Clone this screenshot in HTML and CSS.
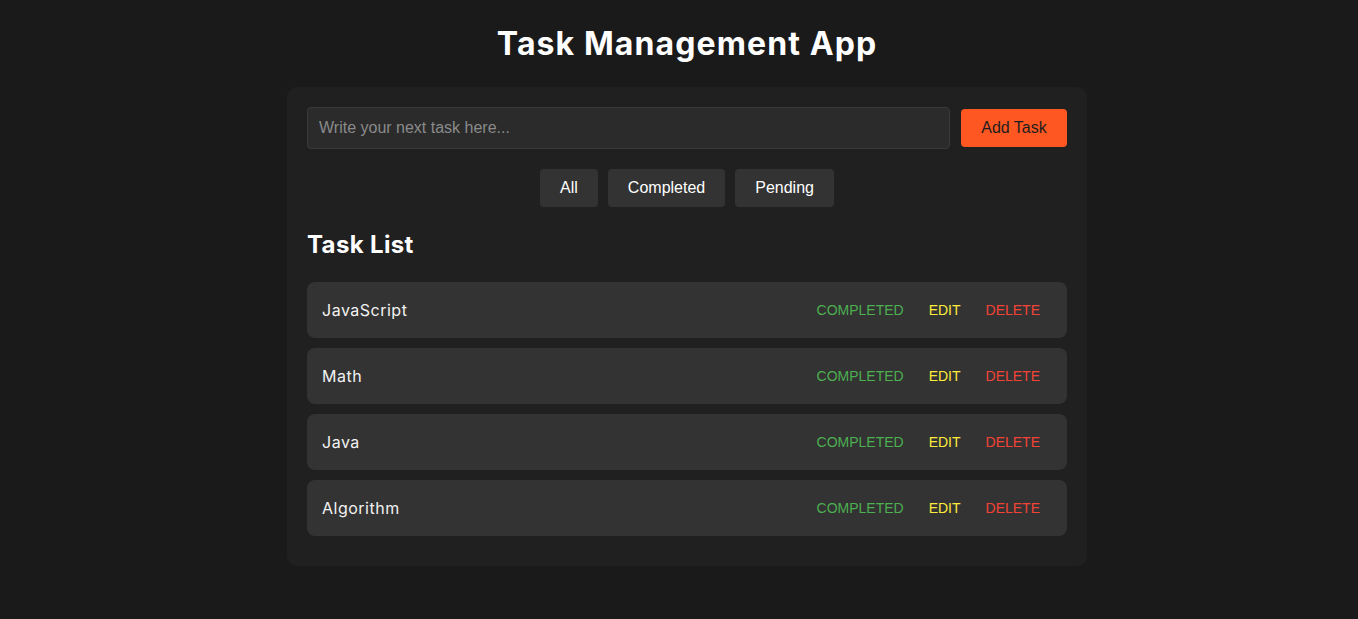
FILE: index.html
```html
<!DOCTYPE html>
<html lang="en">
<head>
<meta charset="utf-8">
<title>Task Management App</title>
<link rel="stylesheet" href="styles.css">
</head>
<body>
<div class="page">
  <h1 class="title">Task Management App</h1>
  <div class="card">
    <div class="add-row">
      <input class="task-input" type="text" placeholder="Write your next task here...">
      <button class="add-btn">Add Task</button>
    </div>
    <div class="filters">
      <button class="filter-btn">All</button>
      <button class="filter-btn">Completed</button>
      <button class="filter-btn">Pending</button>
    </div>
    <h2 class="list-title">Task List</h2>
    <ul class="task-list">
      <li class="task"><span class="task-name">JavaScript</span><div class="actions"><button class="act done">COMPLETED</button><button class="act edit">EDIT</button><button class="act del">DELETE</button></div></li>
      <li class="task"><span class="task-name">Math</span><div class="actions"><button class="act done">COMPLETED</button><button class="act edit">EDIT</button><button class="act del">DELETE</button></div></li>
      <li class="task"><span class="task-name">Java</span><div class="actions"><button class="act done">COMPLETED</button><button class="act edit">EDIT</button><button class="act del">DELETE</button></div></li>
      <li class="task"><span class="task-name">Algorithm</span><div class="actions"><button class="act done">COMPLETED</button><button class="act edit">EDIT</button><button class="act del">DELETE</button></div></li>
    </ul>
  </div>
</div>
</body>
</html>
```

FILE: styles.css
```css
* { box-sizing: border-box; }
html, body { margin: 0; padding: 0; }
body {
  background: #1a1a1a;
  color: #fff;
  font-family: Inter, "Open Sans", sans-serif;
}
.page {
  padding-top: 20px;
  padding-left: 16px;
  display: flex;
  flex-direction: column;
  align-items: center;
}
.title {
  margin: 0 0 19px;
  font-size: 32px;
  line-height: 48px;
  font-weight: 700;
  letter-spacing: 1.1px;
}
.card {
  width: 800px;
  background: #202020;
  border-radius: 10px;
  padding: 20px;
}
.add-row {
  display: flex;
  align-items: center;
  gap: 11px;
}
.task-input {
  flex: 1;
  height: 42px;
  background: #2b2b2b;
  border: 1px solid #3a3a3a;
  border-radius: 4px;
  padding: 0 11px;
  color: #fff;
  font-family: "Liberation Sans", Arial, sans-serif;
  font-size: 16px;
  outline: none;
}
.task-input::placeholder { color: #8a8a8a; }
.add-btn {
  width: 106px;
  height: 38px;
  background: #ff5722;
  color: #1e1e1e;
  border: none;
  border-radius: 4px;
  font-family: "Liberation Sans", Arial, sans-serif;
  font-size: 16px;
}
.filters {
  display: flex;
  justify-content: center;
  gap: 10px;
  margin-top: 20px;
}
.filter-btn {
  height: 38px;
  padding: 0 20px;
  background: #333;
  color: #fff;
  border: none;
  border-radius: 4px;
  font-family: "Liberation Sans", Arial, sans-serif;
  font-size: 16px;
}
.list-title {
  margin: 20px 0 19px;
  font-size: 24px;
  line-height: 36px;
  font-weight: 700;
  letter-spacing: 0.35px;
}
.task-list {
  list-style: none;
  margin: 0;
  padding: 0;
}
.task {
  display: flex;
  align-items: center;
  justify-content: space-between;
  height: 56px;
  margin-bottom: 10px;
  padding: 0 15px;
  background: #333;
  border-radius: 8px;
}
.task-name {
  font-size: 16px;
  color: #f2f2f2;
  letter-spacing: 0.5px;
}
.actions {
  display: flex;
  gap: 1px;
}
.act {
  background: none;
  border: none;
  padding: 6px 12px;
  font-family: "Liberation Sans", Arial, sans-serif;
  font-size: 14px;
}
.done { color: #4caf50; }
.edit { color: #ffeb3b; }
.del { color: #f44336; }
```
